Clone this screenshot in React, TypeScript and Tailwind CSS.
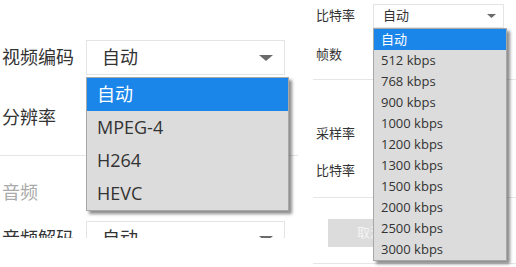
const FONT = "font-['Open_Sans','Noto_Sans_CJK_SC',sans-serif]";

const videoCodecs = ["自动", "MPEG-4", "H264", "HEVC"];
const bitrates = [
  "自动",
  "512 kbps",
  "768 kbps",
  "900 kbps",
  "1000 kbps",
  "1200 kbps",
  "1300 kbps",
  "1500 kbps",
  "2000 kbps",
  "2500 kbps",
  "3000 kbps",
];

function Arrow({ big }: { big?: boolean }) {
  return big ? (
    <svg width="14" height="6" viewBox="0 0 14 6" className="shrink-0">
      <path d="M0 0H14L7 6Z" fill="#6b6b6b" />
    </svg>
  ) : (
    <svg width="9" height="4" viewBox="0 0 9 4" className="shrink-0">
      <path d="M0 0H9L4.5 4Z" fill="#6b6b6b" />
    </svg>
  );
}

function LeftPanel() {
  return (
    <div className="w-[298px] h-[238px] overflow-hidden pt-[40px] shrink-0">
      {/* 视频编码 */}
      <div className="flex items-center h-[35px] pl-[2px]">
        <span className="w-[84px] text-[18px] text-[#333]">视频编码</span>
        <div className="relative w-[199px] h-[35px]">
          <div className="flex items-center justify-between h-full border border-[#e4e4e4] bg-white pl-[15px] pr-[11px]">
            <span className="text-[18px] text-[#333]">自动</span>
            <Arrow big />
          </div>
          {/* open list */}
          <div className="absolute left-0 top-[37px] w-[203px] bg-[#dcdcdc] border border-[#a8a8a8] shadow-[3px_3px_3px_rgba(0,0,0,0.45)] z-10">
            {videoCodecs.map((c, i) => (
              <div
                key={c}
                className={`h-[33px] flex items-center pl-[10px] text-[18px] ${
                  i === 0 ? "bg-[#1a86ea] text-white" : "text-[#333]"
                }`}
              >
                {c}
              </div>
            ))}
          </div>
        </div>
      </div>

      {/* 分辨率 */}
      <div className="flex items-center h-[35px] mt-[25px] pl-[2px]">
        <span className="w-[84px] text-[18px] text-[#333]">分辨率</span>
      </div>

      <div className="h-px bg-[#e6e6e6] mt-[20px]" />

      <div className="mt-[24px] h-[24px] flex items-center pl-[2px] text-[18px] text-[#aaa]">
        音频
      </div>

      {/* 音频解码 (cut off by the crop, as in the shot) */}
      <div className="flex items-center h-[35px] mt-[17px] pl-[2px]">
        <span className="w-[84px] text-[18px] text-[#333]">音频解码</span>
        <div className="flex items-center justify-between w-[199px] h-[35px] border border-[#e4e4e4] bg-white pl-[15px] pr-[11px]">
          <span className="text-[18px] text-[#333]">自动</span>
          <Arrow big />
        </div>
      </div>
    </div>
  );
}

function RightPanel() {
  return (
    <div className="w-[203px] shrink-0 pt-[4px]">
      {/* 比特率 */}
      <div className="flex items-center h-[24px] pl-[3px]">
        <span className="w-[57px] text-[13px] text-[#333]">比特率</span>
        <div className="relative w-[131px] h-[24px]">
          <div className="flex items-center justify-between h-full border border-[#e4e4e4] bg-white pl-[9px] pr-[7px]">
            <span className="text-[13px] text-[#333]">自动</span>
            <Arrow />
          </div>
          <div className="absolute left-0 top-[24px] w-[134px] bg-[#dcdcdc] border border-[#a8a8a8] shadow-[3px_3px_3px_rgba(0,0,0,0.45)] z-10">
            {bitrates.map((b, i) => (
              <div
                key={b}
                className={`h-[21px] flex items-center pl-[7px] text-[13px] ${
                  i === 0 ? "bg-[#1a86ea] text-white" : "text-[#333]"
                }`}
              >
                {b}
              </div>
            ))}
          </div>
        </div>
      </div>

      {/* 帧数 */}
      <div className="flex items-center h-[24px] mt-[15px] pl-[3px]">
        <span className="w-[57px] text-[13px] text-[#333]">帧数</span>
      </div>

      <div className="h-px bg-[#e6e6e6] mt-[12px]" />

      {/* 采样率 */}
      <div className="flex items-center h-[24px] mt-[42px] pl-[3px]">
        <span className="w-[57px] text-[13px] text-[#333]">采样率</span>
      </div>

      {/* 比特率 */}
      <div className="flex items-center h-[24px] mt-[13px] pl-[3px]">
        <span className="w-[57px] text-[13px] text-[#333]">比特率</span>
      </div>

      <div className="h-px bg-[#e6e6e6] mt-[14px]" />

      <div className="mt-[21px] pl-[15px]">
        <button className="w-[84px] h-[28px] bg-[#dcdcdc] text-[#f4f4f4] text-[13px]">
          取消
        </button>
      </div>

      <div className="h-px bg-[#e6e6e6] mt-[16px]" />
    </div>
  );
}

export default function App() {
  return (
    <div className={`w-[516px] h-[267px] bg-white overflow-hidden flex gap-[15px] ${FONT}`}>
      <LeftPanel />
      <RightPanel />
    </div>
  );
}
